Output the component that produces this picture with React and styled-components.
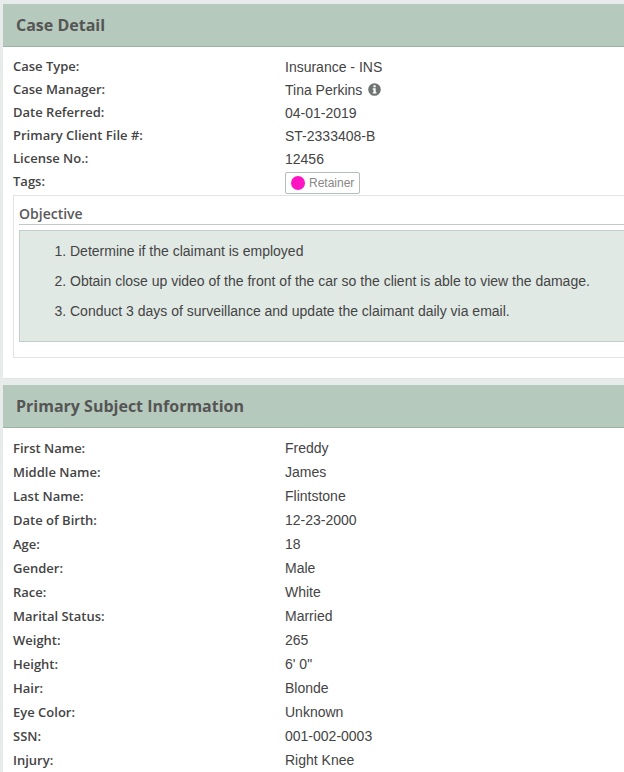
import React from "react";
import styled, { createGlobalStyle } from "styled-components";

const Global = createGlobalStyle`
  html, body { margin: 0; padding: 0; background: #e7ebe9; overflow: hidden; }
  body { width: 624px; height: 772px; }
`;
const Page = styled.div`
  width: 624px; height: 772px; overflow: hidden;
  padding: 4px 0 0 3px; box-sizing: border-box;
  display: flex; flex-direction: column; gap: 6px;
`;
const Card = styled.section`
  width: 660px; background: #fff; flex: none;
  border-bottom: 1px solid #dfe3e1;
`;
const Header = styled.header`
  height: 42px; background: #b5c9bc; border-bottom: 1px solid #9db3a5;
  display: flex; align-items: center; padding: 0 13px;
`;
const Title = styled.h2`
  margin: 0; font: 700 16px/22px "Open Sans", sans-serif; color: #555;
`;
const Body = styled.div`
  padding: ${p => p.$top}px 0 ${p => p.$bottom}px 10px;
`;
const Row = styled.div`
  display: grid; grid-template-columns: 272px 1fr; height: ${p => p.$h}px; align-items: center;
`;
const Label = styled.div`
  font: 600 13px/18px "Open Sans", sans-serif; color: #444;
  padding-bottom: ${p => (p.$low ? 0 : 4)}px;
`;
const Value = styled.div`
  font: 400 14px/18px "Liberation Sans", Arial, sans-serif; color: #444;
  display: flex; align-items: center; gap: 6px;
  padding-bottom: ${p => (p.$lift ? 2 : 0)}px;
`;
const Tag = styled.span`
  display: inline-flex; align-items: center; gap: 4px; height: 22px; box-sizing: border-box;
  padding: 0 5px; border: 1px solid #b4bdb9; border-radius: 2px; background: #fff;
  font: 400 12px/16px "Liberation Sans", Arial, sans-serif; color: #888;
`;
const Dot = styled.i`
  width: 14px; height: 14px; border-radius: 50%; background: #ff14c4; display: block;
`;
const Fieldset = styled.div`
  margin-top: 1px; border: 1px solid #e2e4e3; border-right: 0;
  padding: 9px 0 15px 5px; height: 163px; box-sizing: border-box;
`;
const Legend = styled.div`
  font: 600 14px/18px "Open Sans", sans-serif; color: #5a5a5a;
  border-bottom: 1px solid #c4c7c5; height: 19px;
`;
const Note = styled.div`
  margin-top: 5px; height: 112px; box-sizing: border-box;
  background: #e1e9e4; border: 1px solid #c3d0c8; border-right: 0;
`;
const List = styled.ol`
  margin: 0; padding: 11px 0 0 50px;
  font: 400 14px/18px "Liberation Sans", Arial, sans-serif; color: #444;
  li { margin-bottom: 12px; }
`;

function InfoIcon() {
  return (
    <svg width="13" height="13" viewBox="0 0 13 13" aria-hidden="true">
      <circle cx="6.5" cy="6.5" r="6.3" fill="#6f7472" />
      <rect x="5.4" y="2.2" width="2.3" height="2.1" rx="0.4" fill="#fff" />
      <path d="M4.7 5.2h3v4h.8v1.2H4.7V9.2h.8V6.4h-.8z" fill="#fff" />
    </svg>
  );
}

const subject = [
  ["First Name:", "Freddy"], ["Middle Name:", "James"], ["Last Name:", "Flintstone"],
  ["Date of Birth:", "12-23-2000"], ["Age:", "18"], ["Gender:", "Male"], ["Race:", "White"],
  ["Marital Status:", "Married"], ["Weight:", "265"], ["Height:", "6' 0\""], ["Hair:", "Blonde"],
  ["Eye Color:", "Unknown"], ["SSN:", "001-002-0003"], ["Injury:", "Right Knee"],
];

export default function App() {
  return (
    <Page>
      <Global />
      <Card>
        <Header><Title>Case Detail</Title></Header>
        <Body $top={9} $bottom={20}>
          <Row $h={23}><Label>Case Type:</Label><Value $lift>Insurance - INS</Value></Row>
          <Row $h={23}><Label>Case Manager:</Label><Value $lift>Tina Perkins <InfoIcon /></Value></Row>
          <Row $h={23}><Label>Date Referred:</Label><Value $lift>04-01-2019</Value></Row>
          <Row $h={23}><Label>Primary Client File #:</Label><Value $lift>ST-2333408-B</Value></Row>
          <Row $h={23}><Label>License No.:</Label><Value $lift>12456</Value></Row>
          <Row $h={23}><Label>Tags:</Label><Value><Tag><Dot />Retainer</Tag></Value></Row>
          <Fieldset>
            <Legend>Objective</Legend>
            <Note>
              <List>
                <li>Determine if the claimant is employed</li>
                <li>Obtain close up video of the front of the car so the client is able to view the damage.</li>
                <li>Conduct 3 days of surveillance and update the claimant daily via email.</li>
              </List>
            </Note>
          </Fieldset>
        </Body>
      </Card>
      <Card>
        <Header><Title>Primary Subject Information</Title></Header>
        <Body $top={8} $bottom={0}>
          {subject.map(([l, v]) => (
            <Row $h={24} key={l}><Label $low>{l}</Label><Value>{v}</Value></Row>
          ))}
        </Body>
      </Card>
    </Page>
  );
}
